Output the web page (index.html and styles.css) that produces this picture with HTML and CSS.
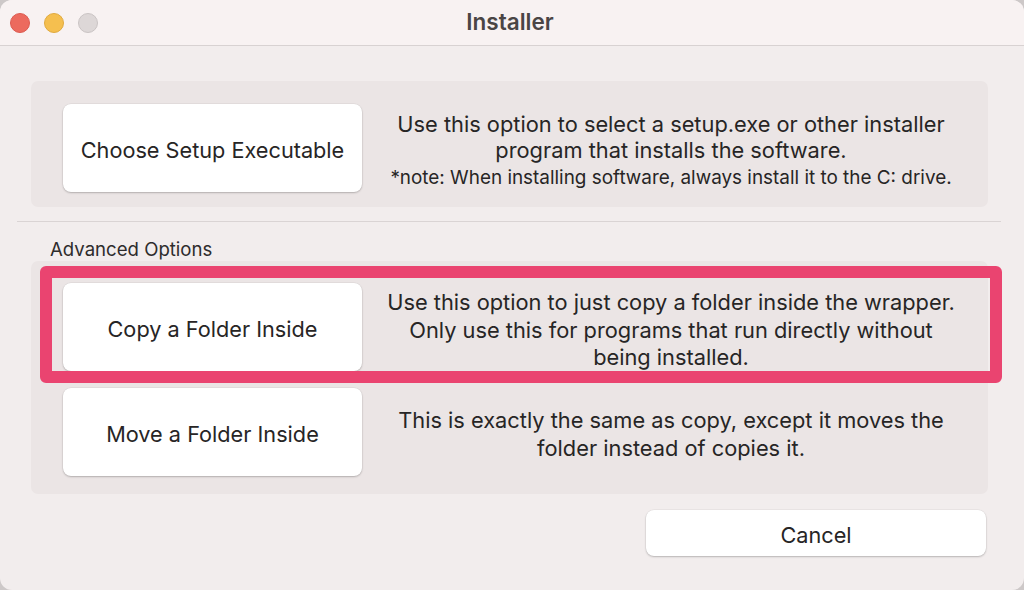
FILE: index.html
```html
<!DOCTYPE html>
<html lang="en">
  <head>
    <meta charset="UTF-8" />
    <meta name="viewport" content="width=device-width, initial-scale=1.0" />
    <title>Installer</title>
    <link rel="stylesheet" href="styles.css">
  </head>
  <body>
    <div class="window">
      <div class="titlebar">
        <div class="lights">
          <span class="light red"></span>
          <span class="light yellow"></span>
          <span class="light off"></span>
        </div>
        <div class="title">Installer</div>
        <div></div>
      </div>

      <div class="content">
        <div class="panel panel-main">
          <div class="option">
            <button class="btn big">Choose Setup Executable</button>
            <div class="desc desc-main">
              Use this option to select a setup.exe or other installer<br />
              program that installs the software.<br />
              <span class="note">*note: When installing software, always install it to the C: drive.</span>
            </div>
          </div>
        </div>

        <hr class="separator" />
        <div class="label">Advanced Options</div>

        <div class="panel panel-adv">
          <div class="highlight"></div>
          <div class="option">
            <button class="btn big">Copy a Folder Inside</button>
            <div class="desc">
              Use this option to just copy a folder inside the wrapper.<br />
              Only use this for programs that run directly without<br />
              being installed.
            </div>
          </div>
          <div class="option">
            <button class="btn big">Move a Folder Inside</button>
            <div class="desc">
              This is exactly the same as copy, except it moves the<br />
              folder instead of copies it.
            </div>
          </div>
        </div>

        <div class="footer">
          <button class="btn cancel">Cancel</button>
        </div>
      </div>
    </div>
  </body>
</html>
```

FILE: styles.css
```css
body {
  margin: 0;
  background: #cdc8c8;
  font-family: Inter, "Liberation Sans", Arial, sans-serif;
  color: #272525;
}
.window {
  width: 1024px;
  height: 590px;
  background: #f2eded;
  border-radius: 12px;
  overflow: hidden;
}
.titlebar {
  height: 45px;
  background: #f8f2f2;
  border-bottom: 1px solid #d8d2d2;
  display: grid;
  grid-template-columns: 1fr auto 1fr;
  align-items: center;
}
.lights {
  display: flex;
  gap: 14px;
  padding-left: 10px;
}
.light {
  width: 20px;
  height: 20px;
  border-radius: 50%;
  box-sizing: border-box;
}
.red {
  background: #ec6a5e;
  border: 1px solid #dc5a50;
}
.yellow {
  background: #f5bf4f;
  border: 1px solid #e0aa3e;
}
.off {
  background: #ddd7d7;
  border: 1px solid #cac4c4;
}
.title {
  font-weight: 600;
  font-size: 22.5px;
  color: #4a4545;
  margin: 0 4px 3px 0;
}
.content {
  padding: 35px 36px 0 31px;
}
.panel {
  background: #ebe5e5;
  border-radius: 7px;
  padding: 0 0 0 32px;
}
.panel-main {
  padding-top: 23px;
  padding-bottom: 15px;
}
.panel-adv {
  position: relative;
  padding-top: 22px;
  padding-bottom: 18px;
  display: flex;
  flex-direction: column;
  gap: 16px;
}
.option {
  display: flex;
  align-items: center;
}
.btn {
  font-family: inherit;
  color: #272525;
  background: #ffffff;
  border: none;
  border-radius: 8px;
  box-shadow: 0 1px 2px rgba(0, 0, 0, 0.22), 0 0 0 0.5px rgba(0, 0, 0, 0.06);
  padding: 0;
}
.big {
  width: 299px;
  height: 88px;
  font-size: 21.7px;
  padding-top: 4px;
}
.desc {
  flex: 1;
  text-align: center;
  font-size: 21.8px;
  line-height: 27.5px;
  padding: 6px 8px 0 0;
}
.desc-main {
  line-height: 26px;
  padding-top: 5px;
}
.note {
  font-size: 18.9px;
}
.separator {
  border: none;
  border-top: 1px solid #dad4d4;
  margin: 14px -13px 0 -14px;
}
.label {
  font-size: 18.6px;
  line-height: 20px;
  margin: 17px 0 2px 19px;
  color: #2e2c2c;
}
.highlight {
  position: absolute;
  left: 9px;
  top: 5px;
  width: 962px;
  height: 117px;
  box-sizing: border-box;
  border: 12px solid #ea4470;
  border-radius: 6px;
  pointer-events: none;
}
.footer {
  display: flex;
  justify-content: flex-end;
  padding: 16px 2px 0 0;
}
.cancel {
  width: 340px;
  height: 46px;
  font-size: 21.7px;
  padding-top: 4px;
}
```
